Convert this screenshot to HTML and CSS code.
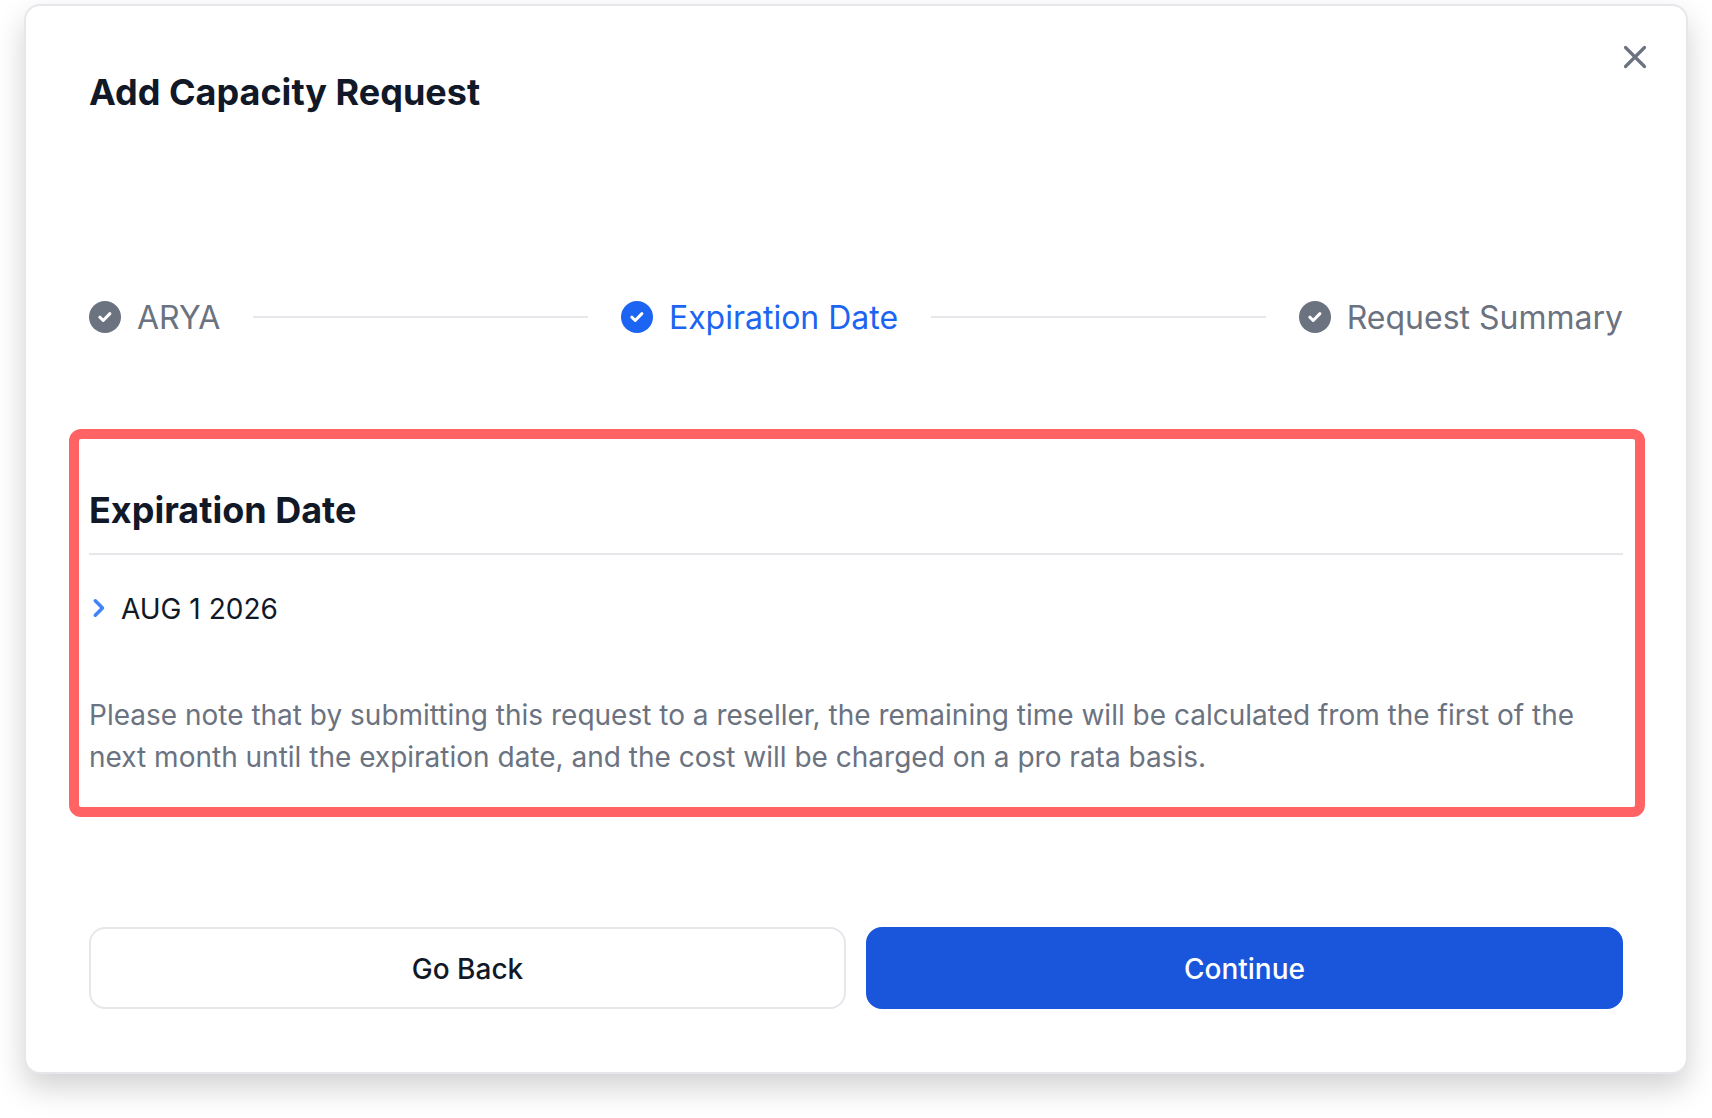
FILE: index.html
```html
<!DOCTYPE html>
<html lang="en">
<head>
<meta charset="utf-8">
<meta name="viewport" content="width=device-width, initial-scale=1">
<title>Add Capacity Request</title>
<link rel="stylesheet" href="styles.css">
</head>
<body>
<main class="dialog" role="dialog" aria-labelledby="dialog-title">
  <header class="dialog-header">
    <h1 class="title" id="dialog-title">Add Capacity Request</h1>
    <button class="close" type="button" aria-label="Close">
      <svg width="24" height="24" viewBox="0 0 24 24" fill="none" stroke="currentColor" stroke-width="3.2" stroke-linecap="round"><path d="M2.5 2.5l19 19M21.5 2.5l-19 19"/></svg>
    </button>
  </header>
  <div class="dialog-body">
    <ol class="steps">
      <li class="step">
        <svg class="step-icon" viewBox="0 0 32 32"><circle cx="16" cy="16" r="16" fill="currentColor"/><path d="M10.8 16.2l3.4 3.3 6.7-6.9" fill="none" stroke="#fff" stroke-width="3" stroke-linecap="round" stroke-linejoin="round"/></svg>
        <span class="step-label">ARYA</span>
      </li>
      <li class="step-line" aria-hidden="true"></li>
      <li class="step step-current" aria-current="step">
        <svg class="step-icon" viewBox="0 0 32 32"><circle cx="16" cy="16" r="16" fill="currentColor"/><path d="M10.8 16.2l3.4 3.3 6.7-6.9" fill="none" stroke="#fff" stroke-width="3" stroke-linecap="round" stroke-linejoin="round"/></svg>
        <span class="step-label">Expiration Date</span>
      </li>
      <li class="step-line" aria-hidden="true"></li>
      <li class="step">
        <svg class="step-icon" viewBox="0 0 32 32"><circle cx="16" cy="16" r="16" fill="currentColor"/><path d="M10.8 16.2l3.4 3.3 6.7-6.9" fill="none" stroke="#fff" stroke-width="3" stroke-linecap="round" stroke-linejoin="round"/></svg>
        <span class="step-label">Request Summary</span>
      </li>
    </ol>
    <section class="panel">
      <h2 class="title panel-title">Expiration Date</h2>
      <p class="date">
        <svg class="chevron" width="20" height="24" viewBox="0 0 20 24" fill="none" stroke="currentColor" stroke-width="3.5" stroke-linecap="round" stroke-linejoin="round"><path d="M6.3 3.8l7.2 7.2-7.2 7.2"/></svg>
        <span>AUG 1 2026</span>
      </p>
      <p class="note">Please note that by submitting this request to a reseller, the remaining time will be calculated from the first of the next month until the expiration date, and the cost will be charged on a pro rata basis.</p>
    </section>
    <div class="actions">
      <button class="button" type="button">Go Back</button>
      <button class="button button-primary" type="button">Continue</button>
    </div>
  </div>
</main>
</body>
</html>
```
FILE: styles.css
```css
* {
  box-sizing: border-box;
}

body {
  margin: 0;
  padding: 4px 24px 44px;
  background: #fff;
  color: #111827;
  font-family: Inter, "Liberation Sans", sans-serif;
  font-size: 28px;
  line-height: 42px;
}

h1, h2, p, ol {
  margin: 0;
  padding: 0;
}

.dialog {
  border: 2px solid #e5e7eb;
  border-radius: 16px;
  background: #fff;
  box-shadow: 0 14px 30px rgba(0, 0, 0, 0.18);
}

.dialog-header {
  display: flex;
  align-items: flex-start;
  justify-content: space-between;
  padding: 29px 29px 0 63px;
}

.title {
  font-size: 36px;
  font-weight: 700;
  line-height: 44px;
}

.dialog-header .title {
  margin-top: 35px;
}

.close {
  display: flex;
  align-items: center;
  justify-content: center;
  width: 44px;
  height: 44px;
  padding: 0;
  border: 0;
  background: none;
  color: #6b7280;
  cursor: pointer;
}

.dialog-body {
  padding: 178px 63px 63px;
}

.steps {
  display: flex;
  align-items: center;
  gap: 33px;
  list-style: none;
  color: #6b7280;
  font-size: 32px;
  line-height: 48px;
}

.step {
  display: flex;
  align-items: center;
  gap: 16px;
  white-space: nowrap;
}

.step-current {
  color: #1c64f2;
}

.step-icon {
  flex: none;
  width: 32px;
  height: 32px;
}

.step-label {
  padding-top: 2px;
}

.step-line {
  flex: 1;
  height: 2px;
  background: #e5e7eb;
}

.panel {
  margin: 87px -22px 0 -20px;
  padding: 49px 12px 29px 10px;
  border: 10px solid #ff6363;
  border-radius: 12px;
}

.panel-title {
  padding-bottom: 21px;
  border-bottom: 2px solid #e5e7eb;
}

.date {
  display: flex;
  align-items: center;
  gap: 12px;
  margin-top: 33px;
}

.chevron {
  color: #3f83f8;
}

.note {
  margin-top: 64px;
  color: #6b7280;
}

.actions {
  display: grid;
  grid-template-columns: 1fr 1fr;
  gap: 20px;
  margin-top: 110px;
}

.button {
  padding: 19px 18px 17px;
  border: 2px solid #e5e7eb;
  border-radius: 16px;
  background: #fff;
  color: inherit;
  font: inherit;
  font-weight: 500;
  cursor: pointer;
}

.button-primary {
  border-color: #1a56db;
  background: #1a56db;
  color: #fff;
}
```
